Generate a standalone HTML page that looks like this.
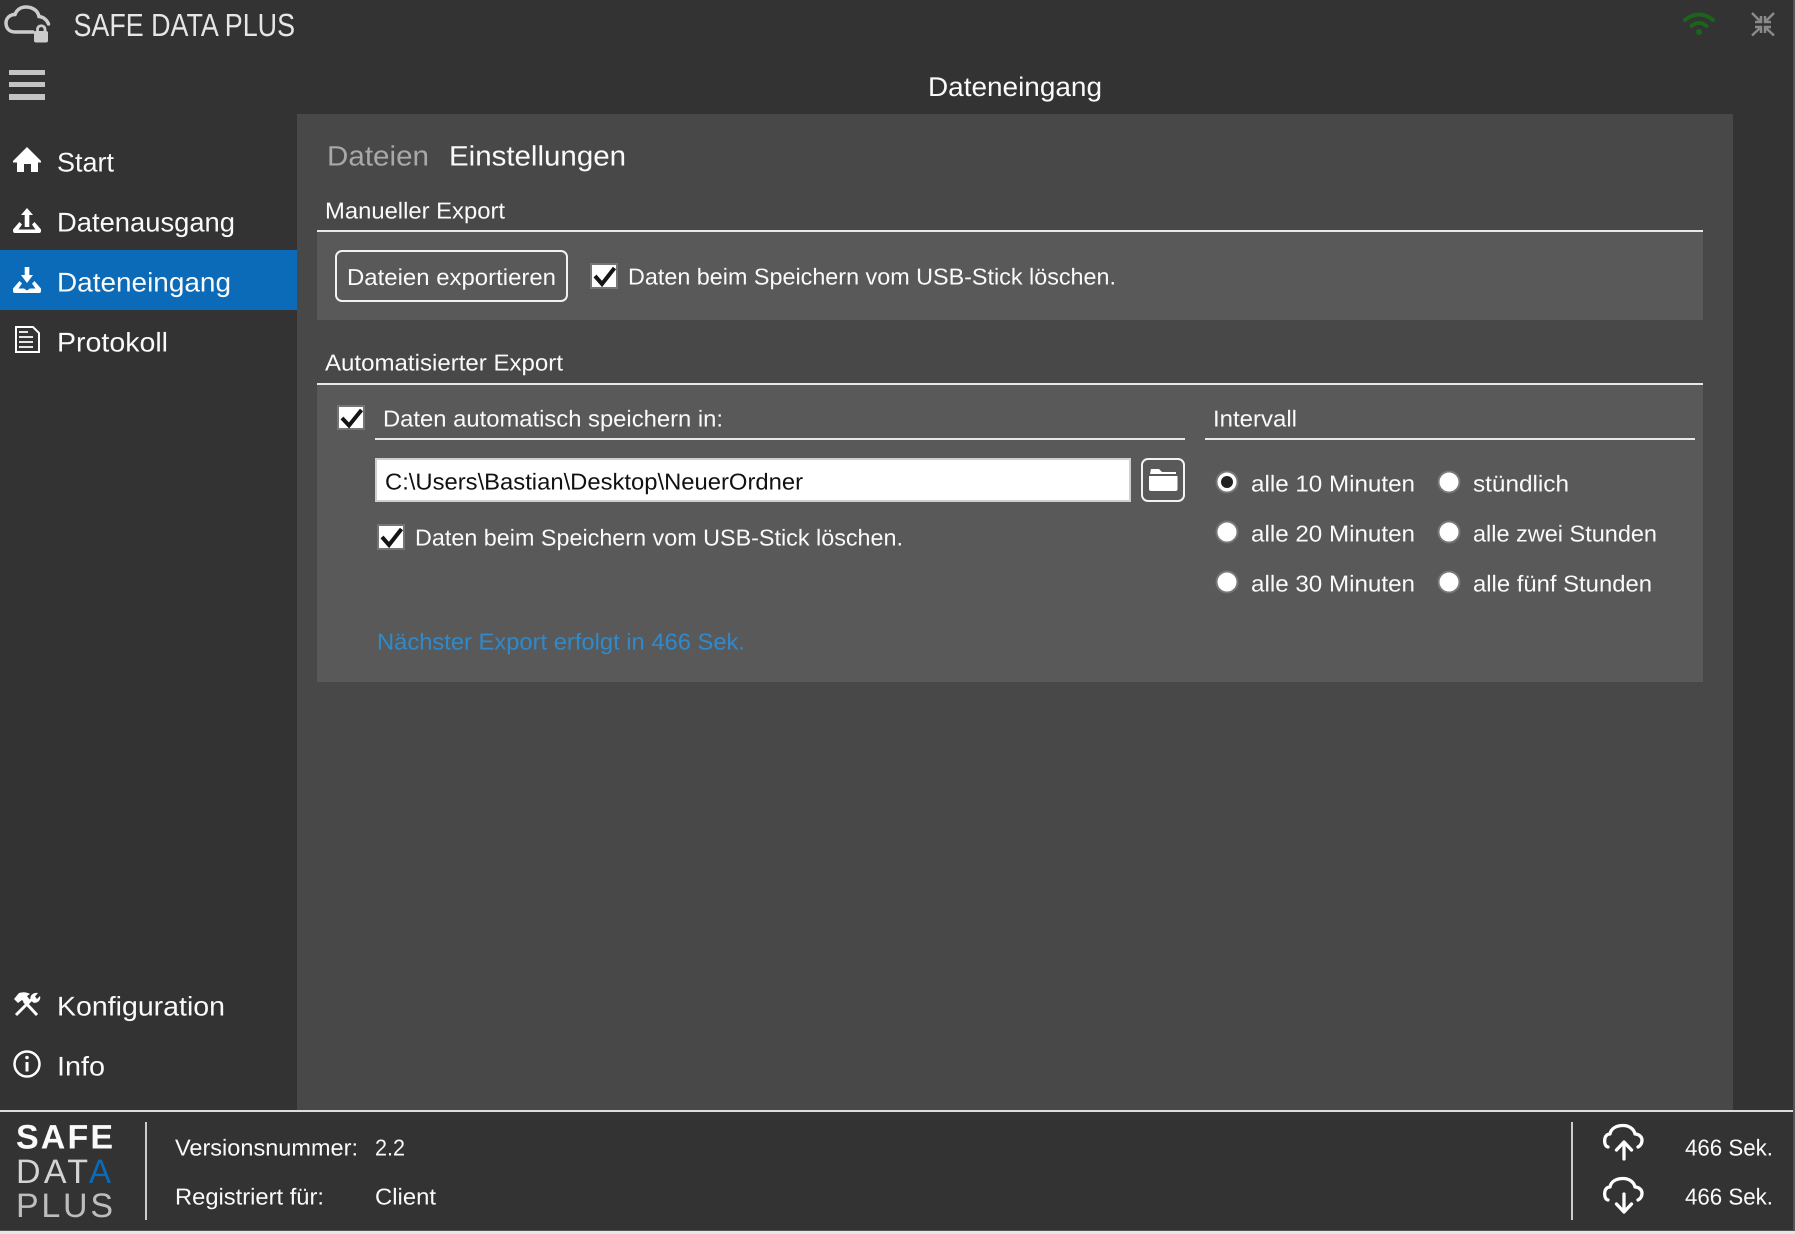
<!DOCTYPE html>
<html lang="de">
<head>
<meta charset="utf-8">
<title>SAFE DATA PLUS</title>
<style>
html,body{margin:0;padding:0;background:#333;width:1795px;height:1234px;overflow:hidden}
svg{display:block}
text{font-family:"Liberation Sans",Arial,sans-serif;fill:#fafafa;text-rendering:geometricPrecision}
.n{font-size:27px}
.s{font-size:23px}
</style>
</head>
<body>
<svg xmlns="http://www.w3.org/2000/svg" width="1795" height="1234" viewBox="0 0 1795 1234">
<rect width="1795" height="1234" fill="#333333"/>
<rect x="297" y="114" width="1436" height="996" fill="#484848"/>
<rect x="0" y="250" width="297" height="60" fill="#0b6bb8"/>

<!-- top bar -->
<g fill="none" stroke="#cccccc" stroke-width="3.500" stroke-linecap="round">
<path d="M33 32H15C9 32 6 28 6 23C6 18 10 14.500 15 14.500C17 9 21.500 7 26 7C33 7 38 11 39 16.500C43.500 17 47 20 48.500 24"/>
</g>
<rect x="34" y="31" width="14" height="11.500" rx="2" fill="#cccccc"/>
<path d="M37.500 32V29.500C37.500 24.500 45 24.500 45 29.500V32" fill="none" stroke="#cccccc" stroke-width="2.800"/>
<text x="73.500" y="36" font-size="32" textLength="221.500" lengthAdjust="spacingAndGlyphs" style="fill:#e6e6e6">SAFE DATA PLUS</text>
<g fill="none" stroke="#1b651b" stroke-width="4" stroke-linecap="round">
<path d="M1685 20Q1699 9 1713 20"/>
<path d="M1691.500 26Q1699 20 1706.500 26"/>
</g>
<circle cx="1699" cy="32" r="3" fill="#1b651b"/>
<g fill="none" stroke="#8a8a8a" stroke-width="2.500">
<path d="M1752 13L1759.500 20.500M1755 22H1761V16"/>
<path d="M1774 13L1766.500 20.500M1771 22H1765V16"/>
<path d="M1752 35.500L1759.500 28.500M1755 27H1761V33"/>
<path d="M1774 35.500L1766.500 28.500M1771 27H1765V33"/>
</g>

<!-- hamburger and heading -->
<rect x="9" y="70" width="36" height="5" fill="#c4c4c4"/>
<rect x="9" y="82" width="36" height="5" fill="#c4c4c4"/>
<rect x="9" y="94" width="36" height="6" fill="#c4c4c4"/>
<text x="928" y="96" class="n" textLength="174" lengthAdjust="spacingAndGlyphs">Dateneingang</text>

<!-- navigation icons -->
<path d="M27 147L41 161V162.500H38V172H31V164H24V172H17V162.500H13V161Z" fill="#fff"/>
<path d="M27 208L33 215H29.300V227H24.700V215H21Z" fill="#fff"/>
<path d="M13 229.500L19.500 222L22 224.500L18.500 229.500H35.500L32 224.500L34.500 222L41 229.500V231Q41 233 39 233H15Q13 233 13 231Z" fill="#fff"/>
<path d="M24.700 267H29.300V275H33L27 283L21 275H24.700Z" fill="#fff"/>
<path d="M13 288.500L19.500 281L22 283.500L18.500 288.500H24L27 290.500L30 288.500H35.500L32 283.500L34.500 281L41 288.500V291Q41 293 39 293H15Q13 293 13 291Z" fill="#fff"/>
<path d="M16 327H33L39 333V352H16Z" fill="none" stroke="#fff" stroke-width="2"/>
<path d="M19 332H28M19 337H33M19 342H33M19 347H33" stroke="#fff" stroke-width="1.800" fill="none"/>
<g fill="none" stroke="#fff" stroke-width="3">
<path d="M37 1015L24 1001"/>
<path d="M16 1015L32 999"/>
</g>
<path d="M14 999L19 993Q25 991 30 994L27 996L30 1000L26 1004L22 1000L18 1003Z" fill="#fff"/>
<path d="M31 1000C29 996 33 992 38 993L35 996.500L37 999L40 996C41.500 1000 37 1004 33 1002.500Z" fill="#fff"/>
<circle cx="27" cy="1064" r="12.500" fill="none" stroke="#fff" stroke-width="2.500"/>
<circle cx="27" cy="1057.500" r="1.800" fill="#fff"/>
<rect x="25.500" y="1062" width="3" height="9.500" fill="#fff"/>

<!-- navigation text -->
<text x="57" y="171.500" class="n" textLength="57" lengthAdjust="spacingAndGlyphs">Start</text>
<text x="57" y="231.500" class="n" textLength="178" lengthAdjust="spacingAndGlyphs">Datenausgang</text>
<text x="57" y="291.500" class="n" textLength="174" lengthAdjust="spacingAndGlyphs">Dateneingang</text>
<text x="57" y="351.500" class="n" textLength="111" lengthAdjust="spacingAndGlyphs">Protokoll</text>
<text x="57" y="1015.500" class="n" textLength="168" lengthAdjust="spacingAndGlyphs">Konfiguration</text>
<text x="57" y="1075.500" class="n" textLength="48" lengthAdjust="spacingAndGlyphs">Info</text>

<!-- tabs -->
<text x="327" y="165.500" font-size="28" textLength="102" lengthAdjust="spacingAndGlyphs" style="fill:#a8a8a8">Dateien</text>
<text x="449" y="165.500" font-size="28" textLength="177" lengthAdjust="spacingAndGlyphs">Einstellungen</text>

<!-- manual export -->
<text x="325" y="218.500" class="s" textLength="180" lengthAdjust="spacingAndGlyphs">Manueller Export</text>
<rect x="317" y="231" width="1386" height="89" fill="#595959"/>
<rect x="317" y="230" width="1386" height="2" fill="#e8e8e8"/>
<rect x="336" y="251" width="231" height="50" rx="6" fill="none" stroke="#f2f2f2" stroke-width="2"/>
<text x="347" y="285" class="s" textLength="209" lengthAdjust="spacingAndGlyphs">Dateien exportieren</text>
<g transform="translate(590 263)">
<rect width="28" height="26" fill="#757575"/><rect x="2" y="2" width="24" height="22" fill="#fff"/>
<path d="M5 13L12 21L24.500 5" fill="none" stroke="#151515" stroke-width="4"/>
</g>
<text x="628" y="284.300" class="s" textLength="488" lengthAdjust="spacingAndGlyphs">Daten beim Speichern vom USB-Stick löschen.</text>

<!-- automated export -->
<text x="325" y="370.500" class="s" textLength="238" lengthAdjust="spacingAndGlyphs">Automatisierter Export</text>
<rect x="317" y="384" width="1386" height="298" fill="#595959"/>
<rect x="317" y="383" width="1386" height="2" fill="#e8e8e8"/>
<g transform="translate(337 405)">
<rect width="28" height="25" fill="#757575"/><rect x="2" y="2" width="24" height="21" fill="#fff"/>
<path d="M5 13L12 20.500L24.500 5" fill="none" stroke="#151515" stroke-width="4"/>
</g>
<text x="383" y="426.500" class="s" textLength="340" lengthAdjust="spacingAndGlyphs">Daten automatisch speichern in:</text>
<rect x="375" y="438" width="810" height="2" fill="#e8e8e8"/>
<rect x="375" y="458" width="756" height="44" fill="#cfcfcf"/>
<rect x="377" y="460" width="752" height="40" fill="#ffffff"/>
<text x="385" y="489.500" class="s" textLength="418" lengthAdjust="spacingAndGlyphs" style="fill:#111">C:\Users\Bastian\Desktop\NeuerOrdner</text>
<rect x="1142" y="459" width="42" height="42" rx="6" fill="none" stroke="#f2f2f2" stroke-width="2"/>
<path d="M1151 469H1159L1162 472H1176V474H1150Z" fill="#fff"/>
<path d="M1149 476H1177.500V489Q1177.500 491 1175.500 491H1151Q1149 491 1149 489Z" fill="#fff"/>
<g transform="translate(377 524)">
<rect width="28" height="26" fill="#757575"/><rect x="2" y="2" width="24" height="22" fill="#fff"/>
<path d="M5 13L12 21L24.500 5" fill="none" stroke="#151515" stroke-width="4"/>
</g>
<text x="415" y="545.500" class="s" textLength="488" lengthAdjust="spacingAndGlyphs">Daten beim Speichern vom USB-Stick löschen.</text>
<text x="377" y="649.500" class="s" textLength="368" lengthAdjust="spacingAndGlyphs" style="fill:#2f8acb">Nächster Export erfolgt in 466 Sek.</text>

<!-- interval -->
<text x="1213" y="426.500" class="s" textLength="84" lengthAdjust="spacingAndGlyphs">Intervall</text>
<rect x="1205" y="438" width="490" height="2" fill="#e8e8e8"/>
<g fill="#ffffff" stroke="#777777" stroke-width="2">
<circle cx="1227" cy="482" r="10.500"/>
<circle cx="1227" cy="532" r="10.500"/>
<circle cx="1227" cy="582" r="10.500"/>
<circle cx="1449" cy="482" r="10.500"/>
<circle cx="1449" cy="532" r="10.500"/>
<circle cx="1449" cy="582" r="10.500"/>
</g>
<circle cx="1227" cy="482" r="6" fill="#222222"/>
<text x="1251" y="491.500" class="s" textLength="164" lengthAdjust="spacingAndGlyphs">alle 10 Minuten</text>
<text x="1251" y="541.500" class="s" textLength="164" lengthAdjust="spacingAndGlyphs">alle 20 Minuten</text>
<text x="1251" y="591.500" class="s" textLength="164" lengthAdjust="spacingAndGlyphs">alle 30 Minuten</text>
<text x="1473" y="491.500" class="s" textLength="96" lengthAdjust="spacingAndGlyphs">stündlich</text>
<text x="1473" y="541.500" class="s" textLength="184" lengthAdjust="spacingAndGlyphs">alle zwei Stunden</text>
<text x="1473" y="591.500" class="s" textLength="179" lengthAdjust="spacingAndGlyphs">alle fünf Stunden</text>

<!-- footer -->
<rect x="0" y="1110" width="1793" height="2" fill="#dddddd"/>
<rect x="0" y="1230" width="1795" height="1" fill="#555555"/>
<rect x="0" y="1231" width="1795" height="3" fill="#e6e6e6"/>
<rect x="1793" y="0" width="2" height="1231" fill="#555555"/>
<text x="16" y="1148.500" font-size="34" font-weight="700" textLength="97" lengthAdjust="spacing">SAFE</text>
<text x="16" y="1183" font-size="34" textLength="72" lengthAdjust="spacing" style="fill:#d4d4d4">DAT</text>
<text x="89" y="1183" font-size="34" textLength="22" lengthAdjust="spacingAndGlyphs" style="fill:#0b6bb8">A</text>
<text x="16" y="1217" font-size="34" textLength="97" lengthAdjust="spacing" style="fill:#bdbdbd">PLUS</text>
<rect x="145" y="1122" width="2" height="98" fill="#cccccc"/>
<text x="175" y="1155.500" class="s" textLength="183" lengthAdjust="spacingAndGlyphs">Versionsnummer:</text>
<text x="375" y="1155.500" class="s" textLength="30" lengthAdjust="spacingAndGlyphs">2.2</text>
<text x="175" y="1204.500" class="s" textLength="149" lengthAdjust="spacingAndGlyphs">Registriert für:</text>
<text x="375" y="1204.500" class="s" textLength="61" lengthAdjust="spacingAndGlyphs">Client</text>
<rect x="1571" y="1122" width="2" height="98" fill="#cccccc"/>
<g fill="none" stroke="#ffffff" stroke-width="3.300" stroke-linecap="round" stroke-linejoin="round">
<path d="M1608 1147C1604 1146 1604.500 1140 1605 1138C1606 1135 1608 1134 1610 1134C1611 1128 1617 1125.500 1623 1125.500C1629 1125.500 1634 1129 1635 1134C1639 1134 1642 1137 1642 1140C1642 1144 1640 1146 1638 1147"/>
<path d="M1624 1159V1142M1616.500 1150L1624 1142L1631.500 1150"/>
<path d="M1608 1200C1604 1199 1604.500 1193 1605 1191C1606 1188 1608 1187 1610 1187C1611 1181 1617 1178.500 1623 1178.500C1629 1178.500 1634 1182 1635 1187C1639 1187 1642 1190 1642 1193C1642 1197 1640 1199 1638 1200"/>
<path d="M1624 1194V1212M1616.500 1204L1624 1212L1631.500 1204"/>
</g>
<text x="1685" y="1155.500" class="s" textLength="88" lengthAdjust="spacingAndGlyphs">466 Sek.</text>
<text x="1685" y="1204.500" class="s" textLength="88" lengthAdjust="spacingAndGlyphs">466 Sek.</text>
</svg>
</body>
</html>
